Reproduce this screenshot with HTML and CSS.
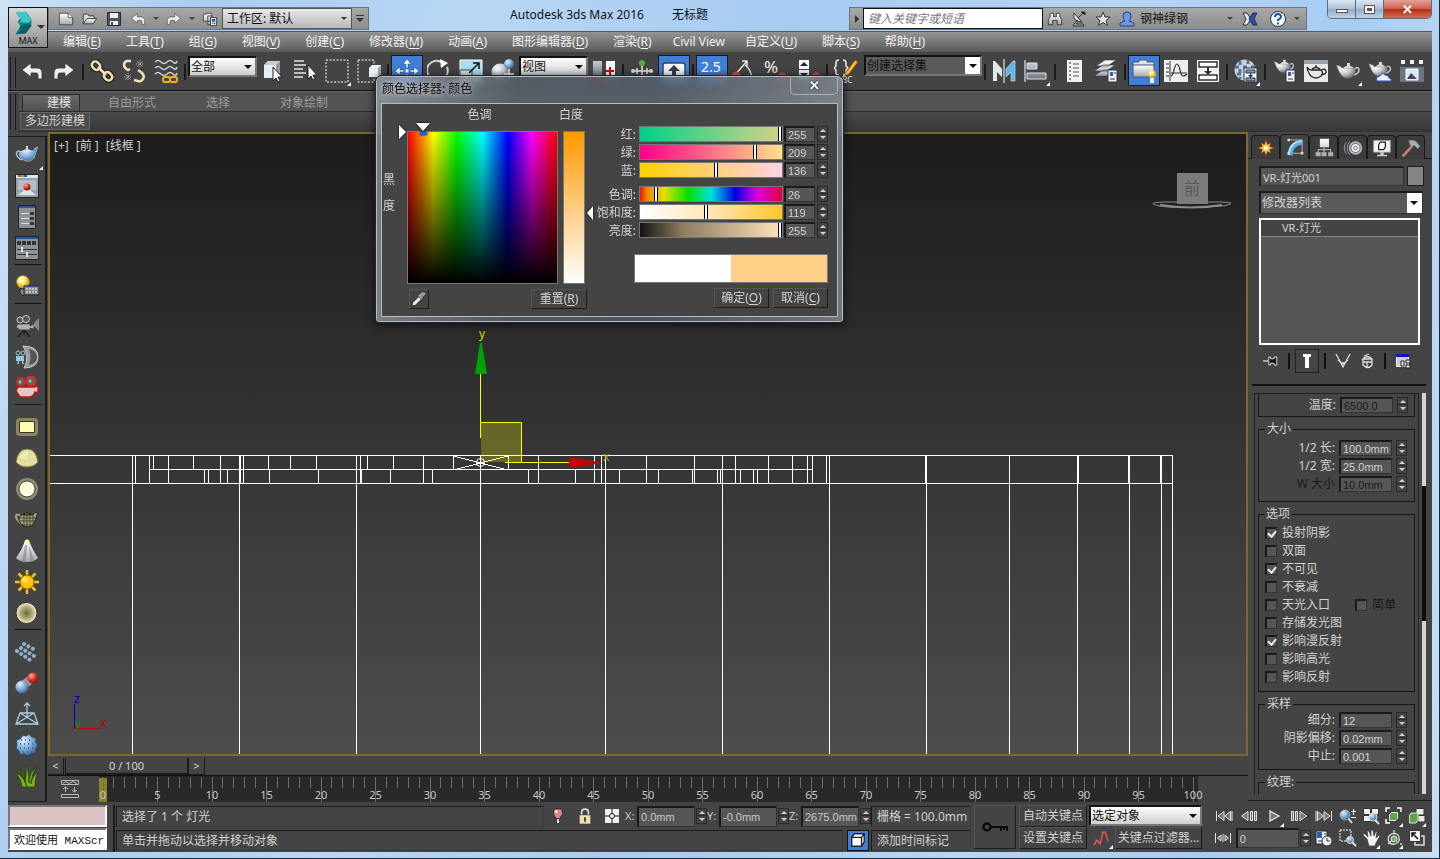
FILE: index.html
```
<!DOCTYPE html>
<html lang="zh-CN">
<head>
  <meta charset="UTF-8">
  <title>Autodesk 3ds Max 2016</title>
  <link rel="stylesheet" href="styles.css">
</head>
<body>

  <!-- icon sprite -->
  <svg class="sprite" width="0" height="0">
    <defs>
      <linearGradient id="metal" x1="0" y1="0" x2="0" y2="1"><stop offset="0" stop-color="#fff"/><stop offset="1" stop-color="#a2a8b0"/></linearGradient>
      <linearGradient id="steel" x1="0" y1="0" x2="0" y2="1"><stop offset="0" stop-color="#c5ccd6"/><stop offset="1" stop-color="#6d7684"/></linearGradient>
      <radialGradient id="ball" cx=".35" cy=".3" r=".8"><stop offset="0" stop-color="#fff"/><stop offset=".5" stop-color="#c4c8cc"/><stop offset="1" stop-color="#555"/></radialGradient>
      <radialGradient id="blueball" cx=".35" cy=".3" r=".8"><stop offset="0" stop-color="#e3f2ff"/><stop offset=".5" stop-color="#7aaad8"/><stop offset="1" stop-color="#31597f"/></radialGradient>
      <radialGradient id="redball" cx=".35" cy=".3" r=".8"><stop offset="0" stop-color="#ffb0a0"/><stop offset=".5" stop-color="#d03020"/><stop offset="1" stop-color="#701008"/></radialGradient>
      <radialGradient id="ring"><stop offset="0" stop-color="#6d6a38"/><stop offset=".6" stop-color="#b5b080"/><stop offset="1" stop-color="#fbf5cc"/></radialGradient>
      <radialGradient id="bulb" cx=".4" cy=".35"><stop offset="0" stop-color="#fff"/><stop offset=".5" stop-color="#fff27a"/><stop offset="1" stop-color="#dcae20"/></radialGradient>
    </defs>

    <symbol id="max" viewBox="0 0 24 28"><path fill="#0c8c90" d="M3 3 14 2l6 8v7l-6 8L3 26l5-9-3-4 3-4z"/><path fill="#3cc8c4" d="M3 3 14 2l2 4-7 4zM9 10l7-4 4 4-3 4-9-1z"/><path fill="#075e66" d="m8 17 9-3 3 3-6 8-6-3zM3 26l5-4 6 3z"/></symbol>
    <symbol id="new" viewBox="0 0 18 16"><path fill="url(#metal)" stroke="#444" d="M1.500 1.500h10l5 5v8h-15z"/><path fill="#fff" stroke="#555" d="M11.500 1.500v5h5"/></symbol>
    <symbol id="open" viewBox="0 0 18 16"><path fill="#ddd" stroke="#333" d="M1.500 13.500V2.500h5l1 2h6v3"/><path fill="url(#metal)" stroke="#333" d="m1.500 13.500 4-6h11l-4 6z"/></symbol>
    <symbol id="save" viewBox="0 0 16 16"><path fill="#4a5464" stroke="#222c38" d="M1.500 1.500h13v13h-13z"/><path fill="#eee" d="M4 2h8v5H4zM4 10h8v4H4z"/><path fill="#4a5464" d="M5 11h2v3H5z"/></symbol>
    <symbol id="undo" viewBox="0 0 24 24"><path fill="#f0f0f0" stroke="#333" stroke-width=".8" d="m2 11 9-7v5h6q5 0 5 5v6h-4v-4q0-2-2-2h-5v4z"/></symbol>
    <symbol id="redo" viewBox="0 0 24 24"><path fill="#f0f0f0" stroke="#333" stroke-width=".8" d="m22 11-9-7v5H7q-5 0-5 5v6h4v-4q0-2 2-2h5v4z"/></symbol>
    <symbol id="project" viewBox="0 0 18 16"><path fill="url(#metal)" stroke="#444" d="M1.500 2.500h4v-1h5v9h-9zM6.500 4.500h5v10h-5z"/><path fill="#f4f4f4" stroke="#333" d="M9.500 6.500h7v9h-7z"/><path fill="#2b5fa8" d="M11 8h4v3h-4zM11 12h1v2h-1zM13 12h2v2h-2z"/></symbol>
    <symbol id="binoculars" viewBox="0 0 18 16"><path fill="url(#metal)" stroke="#333" d="M3.500 1.500h4v4h3v-4h4v4l2 3v6h-5v-5h-5v5h-5v-6l2-3z"/></symbol>
    <symbol id="dish" viewBox="0 0 16 16"><path fill="url(#metal)" stroke="#333" d="M3 2q-2 9 8 9zM7 10l-2 3h7l1 2H2l1-2 3-4z"/><path stroke="#333" d="m7 7 5-5M10 1h4v3"/></symbol>
    <symbol id="star" viewBox="0 0 16 16"><path fill="#eee" stroke="#333" d="m8 1 2 5h5l-4 3.500 1.500 5L8 11.500l-4.500 3L5 9.500 1 6h5z"/></symbol>
    <symbol id="user" viewBox="0 0 16 16"><path fill="#6d97e8" stroke="#24408c" d="M8 1q4 0 4 4 0 3-2 5l5 2v3H1v-3l5-2Q4 8 4 5q0-4 4-4z"/></symbol>
    <symbol id="exchange" viewBox="0 0 16 14"><path fill="#dde6f5" stroke="#333" d="M1 1h4l4 6-4 6H1l3-6z"/><path fill="#2c4fa8" stroke="#24305c" d="M15 1h-4L7 7l4 6h4l-3-6z"/></symbol>
    <symbol id="help" viewBox="0 0 18 18"><circle cx="9" cy="9" r="7.500" fill="#f4f7fb" stroke="#333"/><path fill="none" stroke="#1a50b0" stroke-width="2" d="M6 7q0-3 3-3t3 3q0 1-3 3v1M9 12.500v2"/></symbol>

    <symbol id="link" viewBox="0 0 24 24"><g fill="none" stroke="#2a241a" stroke-width="5"><rect x="2" y="3" width="9" height="7" rx="3.500" transform="rotate(45 6 6)"/><rect x="13" y="14" width="9" height="7" rx="3.500" transform="rotate(45 18 18)"/><path d="m8 8 8 8"/></g><g fill="none" stroke="#f2dfb8" stroke-width="2.500"><rect x="2" y="3" width="9" height="7" rx="3.500" transform="rotate(45 6 6)"/><rect x="13" y="14" width="9" height="7" rx="3.500" transform="rotate(45 18 18)"/><path d="m8 8 8 8"/></g></symbol>
    <symbol id="unlink" viewBox="0 0 24 24"><g fill="none" stroke-width="2.500" stroke="#f2dfb8"><path d="M9 2H5Q2 3 2 6t4 5l2-1M16 11l4 3q3 3 1 6t-5 2l-4-1"/></g><path stroke="#bbb" stroke-dasharray="1 1" d="M14 5h8M15 2l6 6M18 1v8M15 8l6-6M2 18h8M3 15l6 6M6 14v8M3 21l6-6"/></symbol>
    <symbol id="warp" viewBox="0 0 24 24"><g fill="none" stroke="#c9ced2" stroke-width="1.500"><path d="M1 3q3-3 6 0t6 0 6 0 4-1M1 9q3-3 6 0t6 0 6 0 4-1M1 15q3-3 6 0t6 0 6 0 4-1"/></g><g fill="none" stroke="#f0b020" stroke-width="2"><rect x="9" y="18" width="7" height="5" rx="2"/><rect x="16" y="18" width="7" height="5" rx="2"/></g></symbol>
    <symbol id="pick" viewBox="0 0 24 24"><path fill="#e9edf2" d="m3 6 4-4h12v13l-3 4H3z"/><path fill="#c8ced6" d="M15 6h-12l4-4h12z"/><path fill="#8f99a5" d="m15 6 4-4v13l-4 4z"/><path fill="#fff" stroke="#222" d="M12 8v14l3-3 2 4 2-1-2-4h4z"/></symbol>
    <symbol id="byname" viewBox="0 0 24 24"><path stroke="#e4e4e4" stroke-width="1.500" d="M1 2h10M1 6h12M1 10h9M1 14h12M1 18h9"/><path fill="#fff" stroke="#222" d="M15 6v14l3-3 2 4 2-1-2-4h4z"/></symbol>
    <symbol id="region" viewBox="0 0 24 24"><path fill="none" stroke="#fff" stroke-dasharray="2 1.500" d="M1 1h22v22H1z"/></symbol>
    <symbol id="crossing" viewBox="0 0 24 24"><path fill="none" stroke="#fff" stroke-dasharray="2 1.500" d="M1 1h16v22H1z"/><path fill="#eef1f5" d="m12 9 3-3h9v9l-3 3h-9z"/><path fill="#9ba5b2" d="m21 9 3-3v9l-3 3z"/></symbol>
    <symbol id="move" viewBox="0 0 24 24"><path fill="#fff" stroke="#245" stroke-width=".5" d="m12 0 4 5h-3v4h-2V5H8zM12 24l4-5h-3v-4h-2v4H8zM0 12l5-4v3h4v2H5v3zM24 12l-5-4v3h-4v2h4v3z"/><path fill="#fff" d="M10.500 10.500h3v3h-3z"/></symbol>
    <symbol id="rotate" viewBox="0 0 24 24"><path fill="none" stroke="#d6dade" stroke-width="2" d="M4 19A9.500 9.500 0 0 1 15 3.500M20 8a9.500 9.500 0 0 1-4 12"/><path fill="#fff" d="m13 0 8 4-7 5z"/></symbol>
    <symbol id="scale" viewBox="0 0 24 24"><path fill="#a8dcf0" stroke="#fff" d="M1 1h22v22H1z"/><path fill="#dce0e8" stroke="#445" d="M1 11h12v12H1z"/><path fill="none" stroke="#111" stroke-width="1.500" d="m10 14 9-9M14 4h6v6"/></symbol>
    <symbol id="place" viewBox="0 0 24 24"><circle cx="9" cy="13" r="8.500" fill="url(#ball)"/><circle cx="18" cy="5" r="5" fill="url(#blueball)"/><path stroke="#fff" stroke-width="1.500" d="M18 10v10M13 15h10"/></symbol>
    <symbol id="pivot" viewBox="0 0 24 24"><path fill="url(#steel)" d="M1 2h9v16H1z"/><path fill="#fff" d="M14 2h9v16h-9z"/><path fill="#b00" d="M1 18h9v5H1z"/><path stroke="#d00" stroke-width="2" d="M18 8v8M14 12h8"/></symbol>
    <symbol id="manipulate" viewBox="0 0 24 24"><path fill="none" stroke="#e4e8ea" stroke-width="1.500" d="M12 4v9M3 12h18M7 9v6M17 9v6M12 13v9"/><circle cx="12" cy="4" r="3" fill="#58a848"/><circle cx="3" cy="12" r="2" fill="#ddd"/><circle cx="21" cy="12" r="2" fill="#ddd"/></symbol>
    <symbol id="keyboard" viewBox="0 0 24 24"><path fill="#f1f3f6" stroke="#345" stroke-width="1.500" d="M1 6q0-2 2-2h18q2 0 2 2v14H1z"/><path fill="#333c48" d="m12 6 6 6h-4v5h-4v-5H6z"/></symbol>
    <symbol id="snap" viewBox="0 0 24 24"><text x="1" y="13" font-size="14" fill="#fff">2.5</text><path fill="none" stroke="#d24a4a" stroke-width="3" d="M17 22v-3a3 3 0 0 1 6 0v3"/></symbol>
    <symbol id="anglesnap" viewBox="0 0 24 24"><path fill="none" stroke="#e8e8e8" stroke-width="1.500" d="m3 16 12-14M10 2h5v5M13 6q6 4 7 14"/><path fill="none" stroke="#d24a4a" stroke-width="3" d="M1 20v-3a3 3 0 0 1 6 0v3"/></symbol>
    <symbol id="percentsnap" viewBox="0 0 24 24"><text x="0" y="14" font-size="17" fill="#eee">%</text><path fill="none" stroke="#d24a4a" stroke-width="3" d="M15 21v-3a3 3 0 0 1 6 0v3"/></symbol>
    <symbol id="spinsnap" viewBox="0 0 24 24"><path fill="#f4f4f4" d="M3 1h10v9H3zM3 11h10v9H3z"/><path fill="#223" d="m8 3 4 4H4zM8 18l4-4H4z"/><path fill="none" stroke="#d24a4a" stroke-width="3" d="M17 21v-3a3 3 0 0 1 6 0v3"/></symbol>
    <symbol id="sets" viewBox="0 0 24 24"><path fill="none" stroke="#eee" stroke-width="1.500" d="M5 1Q2 1 2 4v3L0 9l2 2v3q0 2 3 2M9 1q3 0 3 3v3l2 2-2 2v3q0 2-3 2"/><path fill="#ffb428" stroke="#503000" stroke-width=".6" d="m12 13 9-12 3 2-9 12-4 2z"/><text x="3" y="24" font-size="8" fill="#eee">ABC</text></symbol>
    <symbol id="mirror" viewBox="0 0 24 24"><path fill="#e2e7ee" d="M1 2v20h4v-9l5 5v-8L3 2z"/><path fill="#5fb2e4" stroke="#c9ecff" stroke-width=".6" d="M23 2v20h-4v-9l-5 5v-8l7-8z"/><path stroke="#fff" d="M12 0v24"/></symbol>
    <symbol id="align" viewBox="0 0 24 24"><path stroke="#fff" d="M1 1v22"/><path fill="url(#steel)" stroke="#dde2e8" d="M3 4h10v6H3zM3 14h19v6H3z"/></symbol>
    <symbol id="layers" viewBox="0 0 24 24"><path fill="#f1f1f1" d="M5 1h15v22H5z"/><path stroke="#888" stroke-width="2" stroke-dasharray="2 2" d="M8 3v18"/><path stroke="#888" stroke-width="1.500" d="M11 5h6M11 9h6M11 13h6M11 17h6"/></symbol>
    <symbol id="layer" viewBox="0 0 24 24"><g fill="url(#metal)" stroke="#333" stroke-width=".6"><path d="m0 17 9-6h12l-8 6zM0 12l9-6h12l-8 6zM2 7l9-6h11l-8 6z"/></g><path fill="#f4f4f4" stroke="#334" d="M14 11h9v12h-9z"/><path fill="#2a62b0" d="M16 13h3v4h-3z"/><path stroke="#334" d="M16 20h5M20 14h2"/></symbol>
    <symbol id="ribbon" viewBox="0 0 24 24"><path fill="#dde3ea" stroke="#4a5668" d="M1 3h6V1h8v2h7v4H1z"/><path fill="url(#metal)" stroke="#4a5668" d="M1 6h21v12H1z"/><circle cx="20" cy="15" r="4" fill="url(#bulb)"/><path fill="#eee" d="M18 19h4v5h-4z"/></symbol>
    <symbol id="curve" viewBox="0 0 24 24"><path fill="#eceef0" d="M0 1h24v22H0z"/><path fill="none" stroke="#333" d="M6 2v20M2 5h3M2 9h3M2 13h3M2 17h3M7 14h16"/><path fill="none" stroke="#333" stroke-width="1.200" d="M7 17C10 17 10 5 13 5s3 12 6 12q2 0 4-2"/></symbol>
    <symbol id="schematic" viewBox="0 0 24 24"><path fill="#f4f4f4" d="M1 1h22v22H1z"/><path fill="#fff" stroke="#333" stroke-width="1.500" d="M3 3h18v5H3zM3 16h18v5H3z"/><path fill="#333" d="M11 8h2v4h3l-4 4-4-4h3z"/></symbol>
    <symbol id="material" viewBox="0 0 24 24"><circle cx="11" cy="11" r="10.500" fill="#c4d4e6"/><path fill="none" stroke="#5a7490" stroke-width="3" stroke-dasharray="4 4" d="M1 8h20M3 15h18M6 2v18M14 1v20"/><path fill="#f6f6f6" stroke="#234" d="M10 9h13v14H10z"/><path fill="#8a98aa" stroke="#234" d="M12 11h9v3h-9zM12 19h9v3h-9z"/><path fill="#234" d="M16 14h1v2h2l-2.500 3-2.500-3h2z"/></symbol>
    <symbol id="teapot" viewBox="0 0 24 20"><path fill="none" stroke="#c2c8cd" stroke-width="1.500" d="M18 8q5-3 5 1t-6 5"/><path fill="url(#ball)" stroke="#666" stroke-width=".5" d="M19 7H6Q4 4 0 4l1 2q2 6 5 9 6 5 11 0 4-4 2-8z"/><path fill="#d9dde2" d="M7 7q5-5 11 0zM11 2h3v3h-3z"/></symbol>
    <symbol id="rsetup" viewBox="0 0 24 24"><use href="#teapot" x="1" y="-1" width="22" height="17"/><path fill="#f4f4f4" stroke="#334" d="M14 11h9v12h-9z"/><path fill="#2a62b0" d="M16 13h3v4h-3z"/><path stroke="#334" d="M16 20h5M20 14h2"/></symbol>
    <symbol id="rframe" viewBox="0 0 24 24"><path fill="#e9eaec" d="M0 1h24v22H0z"/><path fill="#9aa2ac" d="M0 1h24v4H0z"/><path fill="none" stroke="#222" stroke-width="1.300" d="M17 11H7q-2 0-4-3 1 6 4 9 5 4 10 0 3-3 0-6zM17 11q4-2 5 1t-5 4M8 10q4-3 8 0M12 6v2"/></symbol>
    <symbol id="rcloud" viewBox="0 0 24 24"><use href="#teapot" x="0" y="1" width="24" height="19"/><path fill="#e8f0ff" stroke="#2c54b8" d="M9 22q-2-4 3-5 2-4 5-1 4 0 4 3 3 0 2 3z"/></symbol>
    <symbol id="gallery" viewBox="0 0 24 24"><path fill="#eee" d="M1 1h4v4H1zM10 1h4v4h-4zM19 1h4v4h-4z"/><path fill="#6b7584" d="M0 8h24v15H0z"/><path fill="#dbe8f4" stroke="#fff" d="M6 10h12v11H6z"/><path fill="#446" d="m7 20 4-6 3 3 3 3z"/></symbol>

    <symbol id="bteapot" viewBox="0 0 24 24"><path fill="none" stroke="#9fc2dd" stroke-width="1.500" d="M6 9q-5-2-4.500 2T7 17"/><path fill="url(#blueball)" stroke="#d5e8f7" stroke-width=".5" d="M6 8h12q2-4 5-4l-1 2-3 9q-5 6-12 1-5-4-1-8z"/><path fill="#cfe2f2" d="M7 8q5-4 10 0zM11 3h2v3h-2z"/></symbol>
    <symbol id="vfb" viewBox="0 0 24 24"><path fill="#95a2ae" stroke="#222" d="M.5.500h23v23H.5z"/><path fill="#dfe6ec" d="M1 1h22v3H1z"/><path fill="#d44" d="M3 1h3v2H3z"/><path fill="#4c4" d="M6 1h3v2H6z"/><path fill="#44d" d="M9 1h3v2H9z"/><path fill="#b3bec8" d="M3 6h18v10H3z"/><path fill="#dde3e8" d="m3 21 6-5h6l6 5z"/><circle cx="12" cy="13" r="3.500" fill="url(#redball)"/></symbol>
    <symbol id="panel1" viewBox="0 0 24 24"><path fill="#8c9498" stroke="#222" d="M3.500.500h17v23h-17z"/><path fill="#2456a4" d="M4 1h16v2H4z"/><path stroke="#ddd" d="M6 8.500h8M6 13.500h8M6 18.500h8"/><path fill="#333" d="M15 7h4v3h-4zM15 12h4v3h-4zM15 17h4v3h-4z"/></symbol>
    <symbol id="panel2" viewBox="0 0 24 24"><path fill="#8c9498" stroke="#222" d="M.5.500h23v23H.5z"/><path fill="#2456a4" d="M1 1h22v2H1z"/><path fill="#333" d="M2 5h4v4H2zM7 5h4v4H7zM12 5h4v4h-4zM17 5h4v4h-4z"/><path stroke="#333" d="M2 13.500h20M2 18.500h20"/><path stroke="#fff" stroke-width="1.500" d="M7 11v5M12 16v5"/></symbol>
    <symbol id="vlight" viewBox="0 0 24 24"><circle cx="8" cy="7" r="6.500" fill="url(#bulb)"/><path fill="#888" stroke="#222" d="M5 14h6v4l-3 3-3-3z"/><path fill="#7f8b95" stroke="#222" d="M9 11h15v9H9z"/><path stroke="#2456a4" d="M9 11.500h15"/><path stroke="#fff" stroke-dasharray="2 1" d="M11 14h11M11 17h11"/></symbol>
    <symbol id="camera" viewBox="0 0 24 24"><circle cx="5" cy="6" r="3" fill="#555" stroke="#ccc"/><circle cx="11" cy="5" r="3.500" fill="#555" stroke="#ccc"/><path fill="#b0b0b0" stroke="#222" stroke-width=".5" d="M3 10h12v2l4-2v5l-4-1v2H5l-4-3z"/><path fill="#888" d="m19 9 5-5v13l-5-5z"/><path stroke="#222" stroke-width="1.500" d="m9 16-6 7M9 16l6 7M9 16v5"/></symbol>
    <symbol id="domecam" viewBox="0 0 24 24"><path fill="#999" stroke="#ccc" d="M8 1q15 0 15 11T9 23q6-11-1-22z"/><path fill="#555" d="M14 4q8 2 8 8t-8 8q3-8 0-16z"/><circle cx="3" cy="8" r="2" fill="#345" stroke="#9cc"/><circle cx="8" cy="8" r="2" fill="#345" stroke="#9cc"/><path fill="#9cc6dd" d="M1 11h8v5H1zM3 16h1v3H2zM7 16h1l1 3H7z"/></symbol>
    <symbol id="redcam" viewBox="0 0 24 24"><circle cx="6" cy="6" r="4" fill="#566" stroke="#d22" stroke-width="2"/><circle cx="16" cy="5" r="4.500" fill="#566" stroke="#e22" stroke-width="2"/><path fill="#e6c9c4" stroke="#c01818" stroke-width="1.500" d="M3 11h16l4-1v7l-3-1q-2 5-6 5H5L1 15z"/><circle cx="5" cy="6" r="1.500" fill="#6dd"/><circle cx="15" cy="5" r="1.500" fill="#6dd"/></symbol>
    <symbol id="plane" viewBox="0 0 24 24"><rect x="1" y="3" width="22" height="18" rx="4" fill="#8a8660"/><path fill="#fffcb0" stroke="#333" d="M4.500 6.500h15v11h-15z"/></symbol>
    <symbol id="dome" viewBox="0 0 24 24"><path fill="#e2de9e" stroke="#77744a" d="M1 16Q3 3 12 3t11 13q-4 5-11 5T1 16z"/><path fill="#f6f3c8" opacity=".6" d="M5 12q1-7 8-7l-1 9z"/></symbol>
    <symbol id="sphere" viewBox="0 0 24 24"><circle cx="12" cy="12" r="11" fill="#8d8a72"/><circle cx="12" cy="12" r="8" fill="#fffddd" stroke="#444"/></symbol>
    <symbol id="meshpot" viewBox="0 0 24 24"><path fill="none" stroke="#a8a07a" stroke-width="2" d="M6 8Q0 5 1 9t6 7"/><path fill="#a8a07a" stroke="#2a281c" d="M6 7h12q1-3 5-3l-1 3-3 9q-6 6-13 0Q2 12 6 7zM8 6q4-3 8 0z"/><path stroke="#2a281c" stroke-width=".7" d="M5 10h16M5 13h15M7 17h11M9 6v13M12 6v14M15 6v13M18 7v9"/></symbol>
    <symbol id="cone" viewBox="0 0 24 24"><path fill="url(#metal)" d="M10 2h4q4 10 9 17-4 4-11 4T1 19Q7 11 10 2z"/><path fill="#777" opacity=".5" d="M10 6 7 22l4 1 1-17zM14 6l1 16 4-1z"/><circle cx="12" cy="3" r="2.500" fill="#fff8b0"/></symbol>
    <symbol id="sun" viewBox="0 0 24 24"><path stroke="#f2c026" stroke-width="2.500" d="M12 0v24M0 12h24M3.500 3.500l17 17M3.500 20.500l17-17"/><circle cx="12" cy="12" r="7" fill="#ffc400" stroke="#8a6500"/><circle cx="10" cy="10" r="3" fill="#ffe060"/></symbol>
    <symbol id="disc" viewBox="0 0 24 24"><circle cx="11.500" cy="12" r="10.500" fill="url(#ring)" stroke="#333"/></symbol>
    <symbol id="lattice" viewBox="0 0 24 24"><path fill="none" stroke="#25384a" d="m9 4 13 7M6 8l13 8M2 11l13 9M9 4l-7 7M22 11l-7 9"/><g fill="none" stroke="#8fb0cc" stroke-width="4" stroke-linecap="round" stroke-dasharray=".1 4.900"><path d="m9 4 13 7M6 8l13 8M2 11l13 9"/></g></symbol>
    <symbol id="meta" viewBox="0 0 24 24"><path fill="#b09098" d="m4 12 12-9 5 6-10 9z"/><circle cx="7" cy="16" r="6.500" fill="url(#blueball)"/><circle cx="18" cy="7" r="5.500" fill="url(#redball)"/></symbol>
    <symbol id="pyramid" viewBox="0 0 24 24"><path fill="none" stroke="#a9cbe2" stroke-width="1.300" d="M5 11h14l4 11H1zM5 11l18 11M19 11 1 22M12 1v15M9 4l3-3 3 3"/></symbol>
    <symbol id="rock" viewBox="0 0 24 24"><path fill="url(#blueball)" stroke="#2a4868" d="m8 2 3 1 3-2 3 3 4 1v4l2 3-2 4v4l-5 1-3 2-4-2-4 1-1-4-3-3 1-4-1-4 4-1z"/><path stroke="#35587c" stroke-dasharray="1 3" stroke-width="1.500" d="M6 7h12M5 11h15M5 15h14M8 19h10"/></symbol>
    <symbol id="grass" viewBox="0 0 24 24"><path fill="#79b21e" stroke="#263d08" stroke-width=".7" d="M12 23Q9 12 1 9q6 8 6 14l-4-3 2 3h15q0-10 3-15-6 4-7 12Q17 8 22 3q-8 5-8 16Q14 7 11 1q1 10-1 17Q9 8 5 4q3 8 7 19z"/></symbol>

    <symbol id="t-create" viewBox="0 0 24 24"><path stroke="#b8431c" stroke-width="1.500" d="M12 2v20M2 12h20"/><path fill="#ffb03a" d="m12 4 2 4 4-2-2 4 4 2-4 2 2 4-4-2-2 4-2-4-4 2 2-4-4-2 4-2-2-4 4 2z"/><circle cx="12" cy="12" r="3" fill="#fff7b8"/></symbol>
    <symbol id="t-modify" viewBox="0 0 24 24"><path fill="none" stroke="#c6c6c6" d="M4.500 3.500h16v16h-16"/><path fill="none" stroke="#56aeea" stroke-width="6" d="M6 22Q7 7 21 6"/><path fill="none" stroke="#d6efff" stroke-width="1.500" d="M5 20Q6 6 20 5"/><path fill="#ddd" d="M3 2h3v3H3zM19 18h3v3h-3zM3 18h3v3H3z"/></symbol>
    <symbol id="t-hier" viewBox="0 0 24 24"><path fill="url(#metal)" d="M7 1h11v10H7zM2 17h6v5H2zM9 17h6v5H9zM17 17h6v5h-6z"/><path fill="none" stroke="#ddd" d="M12 11v6M5 17v-3h15v3"/></symbol>
    <symbol id="t-motion" viewBox="0 0 24 24"><path fill="none" stroke="#aaa" d="M8 4q-6 8 0 16M4 5q-5 7 0 14"/><circle cx="15" cy="12" r="8" fill="#b6bcc4"/><circle cx="15" cy="12" r="5.500" fill="#e8eaec" stroke="#555"/><circle cx="15" cy="12" r="2" fill="#fff" stroke="#555"/></symbol>
    <symbol id="t-display" viewBox="0 0 24 24"><path fill="#f2f3f5" stroke="#9aa" d="M2 3h20v14H2z"/><path fill="#ccc" d="M10 17h4v3h4v2H6v-2h4z"/><path fill="#fff" stroke="#222" stroke-width="1.500" d="m8 8 2-3h6v6l-2 3H8z"/></symbol>
    <symbol id="t-util" viewBox="0 0 24 24"><path stroke="#c98070" stroke-width="3" d="m2 22 11-12"/><path fill="#a9aeb4" stroke="#555" stroke-width=".5" d="M8 4q5-3 10 0l5 6-3 3-4-4-3 2-3-4q1-2-2-3z"/></symbol>

    <symbol id="pin" viewBox="0 0 18 16"><path stroke="#ddd" stroke-width="1.500" d="M0 8h6"/><path fill="#111" stroke="#eee" d="M6.500 3.500h2v2h4v-2h3v9h-3v-2h-4v2h-2z"/></symbol>
    <symbol id="showend" viewBox="0 0 16 16"><path fill="#fff" d="M4 1h8v3h-2v11H6V4H4z"/></symbol>
    <symbol id="unique" viewBox="0 0 16 16"><path fill="none" stroke="#ddd" stroke-width="1.300" d="m1 1 7 13 7-13M3 7l5 4 5-4M7 10h2"/></symbol>
    <symbol id="trash" viewBox="0 0 16 16"><path fill="none" stroke="#ddd" stroke-width="1.300" d="M4 6h9v6q-4 5-9 0zM4 9h9M5 3l5-2M3 7q5-6 10-1M8 9v5"/></symbol>
    <symbol id="config" viewBox="0 0 16 16"><path fill="#ccc" stroke="#eee" d="M1.500 1.500h12v12h-12z"/><path fill="#11c" d="M1 1h13v3H1z"/><path fill="#eee" stroke="#222" d="M6 8h3v5H6zM11 7h4v3h-4zM11 12h4v3h-4z"/></symbol>

    <symbol id="dropper" viewBox="0 0 18 18"><path fill="#eee" stroke="#111" stroke-width=".8" d="m1 17 1-4 8-8 3 3-8 8z"/><path fill="#999" stroke="#111" stroke-width=".6" d="m9 4 3-3q4-1 5 2l-2 3-2 1 1 2-2 1-5-5 2-1z"/></symbol>
    <symbol id="minicurve" viewBox="0 0 18 18"><path fill="none" stroke="#bbb" d="M.5.500h17v4H.5zM2 3.500l3-2 3 2 4-2 4 2M.5 14.500h17v3H.5zM4.500 7v5M2 9l2.500-2L7 9M13.500 7v5M11 10l2.500 2 2.500-2"/></symbol>
    <symbol id="marker" viewBox="0 0 16 18"><path stroke="#eee" stroke-width="2" d="M8 11v6"/><path fill="#d8868c" stroke="#401818" d="M5 1h6q3 2 2 6l-3 5H6L3 7q-1-4 2-6z"/><circle cx="6" cy="4" r="1.500" fill="#fff"/></symbol>
    <symbol id="lock" viewBox="0 0 12 14"><path fill="none" stroke="#ddd" stroke-width="1.500" d="M3 6V4q0-3 3-3t3 3v2"/><path fill="#f2ddb4" stroke="#333" stroke-width=".5" d="M1 6h10v8H1z"/><path stroke="#333" stroke-width="1.500" d="M6 8v4"/></symbol>
    <symbol id="gizmo" viewBox="0 0 16 16"><path fill="#f2f2f2" d="M1 1h14v14H1z"/><path stroke="#111" d="M8 1v4M8 11v4M1 8h4M11 8h4"/><circle cx="8" cy="8" r="2.500" fill="none" stroke="#111"/></symbol>
    <symbol id="cube" viewBox="0 0 18 18"><path fill="#fff" stroke="#222" stroke-width="1.500" d="m2 6 3-4h11v9l-3 5H2zM2 6h11v10M13 6l3-4"/></symbol>
    <symbol id="key" viewBox="0 0 26 14"><path fill="none" stroke="#0b0b0b" stroke-width="2" d="M8 7h17v4M19 7v4M22 7v3"/><circle cx="5" cy="7" r="3.500" fill="none" stroke="#0b0b0b" stroke-width="2.500"/></symbol>
    <symbol id="tangent" viewBox="0 0 18 18"><path fill="none" stroke="#e05858" stroke-width="1.500" d="m1 16 3-5 3 4 3-12h2l3 9"/><path stroke="#3a48b8" stroke-width="2" stroke-dasharray="2 2" d="M2 10h4M8 2h8M13 13h4"/></symbol>

    <symbol id="p-start" viewBox="0 0 18 14"><path fill="#777" stroke="#e4e4e4" d="M1.500 2v10M9 2.500 3 7l6 4.500zM15.500 2.500l-6 4.500 6 4.500zM17 2v10"/></symbol>
    <symbol id="p-prev" viewBox="0 0 18 14"><path fill="#777" stroke="#e4e4e4" d="M8 2.500 1.500 7 8 11.500zM10.500 2.500h2v9h-2zM14.500 2.500h2v9h-2z"/></symbol>
    <symbol id="p-play" viewBox="0 0 18 14"><path fill="#777" stroke="#e4e4e4" stroke-width="1.300" d="m5 2 9 5-9 5z"/></symbol>
    <symbol id="p-next" viewBox="0 0 18 14"><path fill="#777" stroke="#e4e4e4" d="m10 2.500 6.500 4.500-6.500 4.500zM1.500 2.500h2v9h-2zM5.500 2.500h2v9h-2z"/></symbol>
    <symbol id="p-end" viewBox="0 0 18 14"><path fill="#777" stroke="#e4e4e4" d="M16.500 2v10M9 2.500 15 7l-6 4.500zM2.500 2.500l6 4.500-6 4.500zM1 2v10"/></symbol>
    <symbol id="p-mode" viewBox="0 0 18 14"><path fill="#777" stroke="#e4e4e4" d="M1.500 2v10M7 4 3.500 7 7 10zM11 4l3.500 3-3.500 3zM16.500 2v10M9 3v8"/></symbol>
    <symbol id="n-time" viewBox="0 0 18 18"><path fill="#f4f4f4" stroke="#223" d="M1 2h11v13H1z"/><path fill="#2a62b0" d="M2 3h5v6H2z"/><path stroke="#223" d="M3 12h8M9 5h2M9 8h2"/><circle cx="12" cy="12" r="5" fill="#eee" stroke="#334"/><path fill="none" stroke="#334" d="M12 9v3h3"/></symbol>
    <symbol id="n-zoom" viewBox="0 0 18 18"><path stroke="#ddd" stroke-width="2" d="m9 11 4 5"/><circle cx="6" cy="8" r="5" fill="url(#blueball)" stroke="#ddd" stroke-width=".5"/><path stroke="#fff" d="M14.500 2v6M12 4.500h5M12 10.500h5"/></symbol>
    <symbol id="n-zoomall" viewBox="0 0 18 18"><path fill="#eee" stroke="#333" d="M1.500 1.500h7v6h-7zM9.500 1.500h7v6h-7zM1.500 8.500h7v6h-7z"/><circle cx="11" cy="10" r="4" fill="url(#blueball)" stroke="#ddd"/><path stroke="#ddd" stroke-width="2" d="m13 13 4 4"/></symbol>
    <symbol id="n-ext" viewBox="0 0 18 18"><path fill="none" stroke="#fff" stroke-width="1.500" d="M1 5V1h4M12 1h4v4M1 12v4h4"/><path fill="#5fa34a" stroke="#dbe9d4" d="m4.500 7.500 2-2h6v6l-2 2h-6z"/></symbol>
    <symbol id="n-extall" viewBox="0 0 18 18"><path fill="#e4ecdf" stroke="#333" d="M8 1.500h8v7H8zM10 8h7v7h-7z"/><path fill="#5fa34a" stroke="#dbe9d4" d="M1.500 8.500 3 6h7v7l-2 3H1.500z"/></symbol>
    <symbol id="n-region" viewBox="0 0 18 18"><path fill="none" stroke="#fff" stroke-dasharray="2 1" d="M1 1h11v11H1z"/><circle cx="11" cy="11" r="3.500" fill="url(#blueball)" stroke="#ddd"/><path stroke="#ddd" stroke-width="2" d="m13 13 4 4"/></symbol>
    <symbol id="n-pan" viewBox="0 0 18 18"><path fill="#f2f2f2" stroke="#333" stroke-width=".7" d="m5 10-4-4 1-2 4 4-1-6h2l2 5V1h2l1 6 2-5 1 1-1 6 3-3 1 1-4 7-1 3H7z"/></symbol>
    <symbol id="n-orbit" viewBox="0 0 18 18"><path fill="none" stroke="#ddd" stroke-width="1.300" d="M9 1v4M3 15l3-3M5 6q4-3 8 0 3 5-1 8-5 3-8-1-2-4 1-7M15 15h2"/><circle cx="9" cy="10" r="3" fill="#7fae6c" stroke="#eee"/></symbol>
    <symbol id="n-max" viewBox="0 0 18 18"><path fill="none" stroke="#ddd" stroke-width="1.500" d="M7 7h9v9H7z"/><path fill="#f4f4f4" stroke="#333" d="M1.500 1.500h11v11h-11z"/><path fill="none" stroke="#111" stroke-width="1.500" d="m4 4 6 6M4 8V4h4"/></symbol>
  </svg>

  <div class="window">

    <header class="top">
      <button class="app-button" aria-label="应用程序菜单"><svg class="app-logo"><use href="#max"/></svg><span>MAX</span></button>

      <div class="titlebar">
        <div class="quick">
          <button aria-label="新建"><svg><use href="#new"/></svg></button>
          <button aria-label="打开"><svg><use href="#open"/></svg></button>
          <button aria-label="保存"><svg><use href="#save"/></svg></button>
          <button class="drop" aria-label="撤消"><svg><use href="#undo"/></svg></button>
          <button class="drop" aria-label="重做"><svg><use href="#redo"/></svg></button>
          <button aria-label="项目"><svg><use href="#project"/></svg></button>
          <span class="workspace">
            <select aria-label="工作区"><option>工作区: 默认</option></select>
          </span>
          <button class="more" aria-label="自定义"></button>
        </div>
        <div class="caption"><span>Autodesk 3ds Max 2016</span><span>无标题</span></div>
        <div class="infocenter">
          <button class="info-arrow" aria-label="展开"></button>
          <input class="search" type="text" placeholder="键入关键字或短语" aria-label="搜索">
          <button aria-label="查找"><svg><use href="#binoculars"/></svg></button>
          <button aria-label="通讯"><svg><use href="#dish"/></svg></button>
          <button aria-label="收藏"><svg><use href="#star"/></svg></button>
          <button class="account"><svg><use href="#user"/></svg>钢神绿钢</button>
          <button aria-label="Exchange"><svg><use href="#exchange"/></svg></button>
          <button class="drop help" aria-label="帮助"><svg><use href="#help"/></svg></button>
        </div>
        <div class="win-buttons">
          <button aria-label="最小化"><i class="min"></i></button>
          <button aria-label="最大化"><i class="restore"></i></button>
          <button class="close" aria-label="关闭">✕</button>
        </div>
      </div>

      <nav class="menubar">
        <button>编辑(<u>E</u>)</button>
        <button>工具(<u>T</u>)</button>
        <button>组(<u>G</u>)</button>
        <button>视图(<u>V</u>)</button>
        <button>创建(<u>C</u>)</button>
        <button>修改器(<u>M</u>)</button>
        <button>动画(<u>A</u>)</button>
        <button>图形编辑器(<u>D</u>)</button>
        <button>渲染(<u>R</u>)</button>
        <button class="tight">Civil View</button>
        <button>自定义(<u>U</u>)</button>
        <button>脚本(<u>S</u>)</button>
        <button>帮助(<u>H</u>)</button>
      </nav>
    </header>

    <div class="toolbar">
      <i class="grip"></i>
      <button aria-label="撤消"><svg><use href="#undo"/></svg></button>
      <button aria-label="重做"><svg><use href="#redo"/></svg></button>
      <i class="sep"></i>
      <button aria-label="链接"><svg><use href="#link"/></svg></button>
      <button aria-label="断开链接"><svg><use href="#unlink"/></svg></button>
      <button aria-label="绑定到空间扭曲"><svg><use href="#warp"/></svg></button>
      <i class="sep"></i>
      <span class="combo filter"><select aria-label="选择过滤器"><option>全部</option></select></span>
      <button aria-label="选择对象"><svg><use href="#pick"/></svg></button>
      <button aria-label="按名称选择"><svg><use href="#byname"/></svg></button>
      <button class="fly" aria-label="矩形选择区域"><svg><use href="#region"/></svg></button>
      <button aria-label="窗口/交叉"><svg><use href="#crossing"/></svg></button>
      <i class="sep"></i>
      <button class="on" aria-label="移动"><svg><use href="#move"/></svg></button>
      <button aria-label="旋转"><svg><use href="#rotate"/></svg></button>
      <button aria-label="缩放"><svg><use href="#scale"/></svg></button>
      <button aria-label="放置"><svg><use href="#place"/></svg></button>
      <span class="combo filter"><select aria-label="参考坐标系"><option>视图</option></select></span>
      <button aria-label="轴点中心"><svg><use href="#pivot"/></svg></button>
      <i class="sep"></i>
      <button aria-label="操纵"><svg><use href="#manipulate"/></svg></button>
      <button class="on" aria-label="键盘快捷键覆盖"><svg><use href="#keyboard"/></svg></button>
      <i class="sep"></i>
      <button class="on" aria-label="捕捉开关"><svg><use href="#snap"/></svg></button>
      <button aria-label="角度捕捉"><svg><use href="#anglesnap"/></svg></button>
      <button aria-label="百分比捕捉"><svg><use href="#percentsnap"/></svg></button>
      <button aria-label="微调器捕捉"><svg><use href="#spinsnap"/></svg></button>
      <i class="sep"></i>
      <button aria-label="编辑命名选择集"><svg><use href="#sets"/></svg></button>
      <span class="combo named"><select aria-label="命名选择集"><option>创建选择集</option></select></span>
      <i class="sep"></i>
      <button aria-label="镜像"><svg><use href="#mirror"/></svg></button>
      <button class="fly" aria-label="对齐"><svg><use href="#align"/></svg></button>
      <i class="sep"></i>
      <button aria-label="场景资源管理器"><svg><use href="#layers"/></svg></button>
      <button aria-label="层资源管理器"><svg><use href="#layer"/></svg></button>
      <i class="sep"></i>
      <button class="on" aria-label="切换功能区"><svg><use href="#ribbon"/></svg></button>
      <button aria-label="曲线编辑器"><svg><use href="#curve"/></svg></button>
      <button aria-label="图解视图"><svg><use href="#schematic"/></svg></button>
      <i class="sep"></i>
      <button class="fly" aria-label="材质编辑器"><svg><use href="#material"/></svg></button>
      <i class="sep"></i>
      <button aria-label="渲染设置"><svg><use href="#rsetup"/></svg></button>
      <button aria-label="渲染帧窗口"><svg><use href="#rframe"/></svg></button>
      <button class="fly" aria-label="渲染产品"><svg><use href="#teapot"/></svg></button>
      <button aria-label="云渲染"><svg><use href="#rcloud"/></svg></button>
      <button aria-label="渲染库"><svg><use href="#gallery"/></svg></button>
    </div>

    <div class="ribbon">
      <i class="grip"></i>
      <div class="ribbon-body">
        <div class="ribbon-tabs">
          <button class="active">建模</button>
          <button>自由形式</button>
          <button>选择</button>
          <button>对象绘制</button>
        </div>
        <div class="ribbon-panel"><button>多边形建模</button></div>
      </div>
    </div>

    <main class="main">

      <aside class="side">
        <button class="fly" aria-label="渲染"><svg><use href="#bteapot"/></svg></button>
        <button aria-label="帧缓冲"><svg><use href="#vfb"/></svg></button>
        <button aria-label="选项面板"><svg><use href="#panel1"/></svg></button>
        <button aria-label="调整面板"><svg><use href="#panel2"/></svg></button>
        <i class="sep"></i>
        <button aria-label="灯光列表"><svg><use href="#vlight"/></svg></button>
        <i class="sep"></i>
        <button aria-label="物理相机"><svg><use href="#camera"/></svg></button>
        <button aria-label="穹顶相机"><svg><use href="#domecam"/></svg></button>
        <button aria-label="立体相机"><svg><use href="#redcam"/></svg></button>
        <i class="sep"></i>
        <button aria-label="平面灯光"><svg><use href="#plane"/></svg></button>
        <button aria-label="穹顶灯光"><svg><use href="#dome"/></svg></button>
        <button aria-label="球体灯光"><svg><use href="#sphere"/></svg></button>
        <button aria-label="网格灯光"><svg><use href="#meshpot"/></svg></button>
        <button aria-label="IES 灯光"><svg><use href="#cone"/></svg></button>
        <button aria-label="太阳光"><svg><use href="#sun"/></svg></button>
        <button aria-label="环境光"><svg><use href="#disc"/></svg></button>
        <i class="sep"></i>
        <button aria-label="实例化"><svg><use href="#lattice"/></svg></button>
        <button aria-label="变形球"><svg><use href="#meta"/></svg></button>
        <button aria-label="代理"><svg><use href="#pyramid"/></svg></button>
        <button aria-label="置换"><svg><use href="#rock"/></svg></button>
        <button aria-label="毛发"><svg><use href="#grass"/></svg></button>
      </aside>

      <section class="stage">
        <div class="viewport">
          <svg class="scene">
            <!-- wireframe -->
            <g stroke="#fff" shape-rendering="crispEdges">
              <path fill="none" d="M0 321.500H1122.500M0 349.500H1122.500M99 335.500H763"/>
              <path d="M85.500 322v28M99.500 322v28M103.500 322v14M118.500 322v28M143.500 322v14M154.500 336v14M158.500 336v14M170.500 322v28M177.500 336v14M190.500 322v28M193.500 322v28M218.500 322v14M219.500 336v14M240.500 322v14M266.500 322v14M310.500 322v28M317.500 322v14M343.500 322v14M373.500 322v28M268.500 336v14M311.500 336v14M340.500 336v14M382.500 336v14"/>
              <path d="M403.500 322v14M458.500 322v14M478.500 336v14M488.500 322v28M525.500 336v14M544.500 322v28M551.500 322v28M569.500 336v14M596.500 322v28M608.500 336v14M642.500 336v14M644.500 322v28M667.500 336v14M670.500 336v14M685.500 322v28M690.500 336v14M703.500 336v14M707.500 336v14M718.500 322v28M742.500 322v28M757.500 322v28M762.500 322v28M776.500 322v28M875.500 322v28M1028.500 322v28M1078.500 322v28M1110.500 322v28"/>
              <path d="m403 322 55 14M403 336l55-14" fill="none"/>
              <line x1="82.500" y1="322" x2="82.500" y2="100%"/>
              <line x1="189.500" y1="322" x2="189.500" y2="100%"/>
              <line x1="306.500" y1="322" x2="306.500" y2="100%"/>
              <line x1="430.500" y1="322" x2="430.500" y2="100%"/>
              <line x1="555.500" y1="322" x2="555.500" y2="100%"/>
              <line x1="672.500" y1="322" x2="672.500" y2="100%"/>
              <line x1="779.500" y1="322" x2="779.500" y2="100%"/>
              <line x1="876.500" y1="322" x2="876.500" y2="100%"/>
              <line x1="959.500" y1="322" x2="959.500" y2="100%"/>
              <line x1="1027.500" y1="322" x2="1027.500" y2="100%"/>
              <line x1="1079.500" y1="322" x2="1079.500" y2="100%"/>
              <line x1="1111.500" y1="322" x2="1111.500" y2="100%"/>
              <line x1="1122.500" y1="322" x2="1122.500" y2="100%"/>
            </g>
            <!-- move gizmo -->
            <rect x="431" y="288" width="41" height="40" fill="#ffff00" fill-opacity=".25"/>
            <path fill="none" stroke="#ff0" shape-rendering="crispEdges" d="M430.500 240v64M430.500 288.500h41v40M455 328.500h64"/>
            <path fill="#00a000" d="M430 209h2l5 31h-12z"/>
            <path fill="#c80000" d="m519 323 34 6-34 5z"/>
            <circle cx="430.500" cy="328.500" r="4" fill="none" stroke="#fff"/>
            <text x="429" y="204" fill="#d8d800" font-size="12">y</text>
            <text x="553" y="327" fill="#a8a800" font-size="12">x</text>
            <!-- world axis -->
            <path stroke="#0000c8" d="M24.500 570v24"/>
            <path stroke="#c80000" d="M24 594.500h26"/>
            <text x="24" y="569" fill="#0000c8" font-size="12">z</text>
            <text x="25" y="594" fill="#009000" font-size="12">y</text>
            <text x="50" y="593" fill="#b00000" font-size="12">x</text>
          </svg>
          <div class="vp-label"><span>[+]</span><span>[前 ]</span><span>[线框 ]</span></div>
          <svg class="viewcube" viewBox="0 0 80 42">
            <path fill="none" stroke="#8c8c8c" d="M25 33H12Q-8 34 8 37t62 0q18-3 0-4H56"/>
            <path fill="none" stroke="#8c8c8c" stroke-width="2" d="M8 36q32 5 62 0"/>
            <rect x="25" y="4" width="31" height="31" fill="#7c7c7c"/>
            <text x="40" y="25" font-size="16" text-anchor="middle" fill="#585858">前</text>
          </svg>
        </div>

        <div class="timeslider">
          <button>&lt;</button>
          <button class="thumb">0 / 100</button>
          <button>&gt;</button>
        </div>
        <div class="track">
          <button class="minicurve" aria-label="打开迷你曲线编辑器"><svg><use href="#minicurve"/></svg></button>
          <div class="ruler"><svg id="ruler"></svg></div>
        </div>
      </section>

      <aside class="command">
        <div class="cmd-tabs">
          <button aria-label="创建"><svg><use href="#t-create"/></svg></button>
          <button class="active" aria-label="修改"><svg><use href="#t-modify"/></svg></button>
          <button aria-label="层次"><svg><use href="#t-hier"/></svg></button>
          <button aria-label="运动"><svg><use href="#t-motion"/></svg></button>
          <button aria-label="显示"><svg><use href="#t-display"/></svg></button>
          <button aria-label="实用程序"><svg><use href="#t-util"/></svg></button>
        </div>
        <div class="cmd-body">
          <div class="name-row">
            <input type="text" value="VR-灯光001" aria-label="名称">
            <button class="swatch" aria-label="对象颜色"></button>
          </div>
          <span class="combo modifiers"><select aria-label="修改器列表"><option>修改器列表</option></select></span>
          <div class="stack"><div class="stack-item">VR-灯光</div></div>
          <div class="stack-tools">
            <button aria-label="锁定堆栈"><svg><use href="#pin"/></svg></button>
            <i class="sep"></i>
            <button class="pressed" aria-label="显示最终结果"><svg><use href="#showend"/></svg></button>
            <i class="sep"></i>
            <button aria-label="使唯一"><svg><use href="#unique"/></svg></button>
            <button aria-label="移除修改器"><svg><use href="#trash"/></svg></button>
            <i class="sep"></i>
            <button aria-label="配置修改器集"><svg><use href="#config"/></svg></button>
          </div>
        </div>

        <div class="rollouts">
          <div class="rollout">
            <div class="group cut">
              <div class="param"><label for="temp">温度:</label><input id="temp" type="text" value="6500.0" disabled><span class="spin"><button aria-label="增"></button><button aria-label="减"></button></span></div>
            </div>
            <fieldset class="group size">
              <legend>大小</legend>
              <div class="param"><label for="len">1/2 长:</label><input id="len" type="text" value="100.0mm"><span class="spin"><button aria-label="增"></button><button aria-label="减"></button></span></div>
              <div class="param"><label for="wid">1/2 宽:</label><input id="wid" type="text" value="25.0mm"><span class="spin"><button aria-label="增"></button><button aria-label="减"></button></span></div>
              <div class="param off"><label for="wsize">W 大小</label><input id="wsize" type="text" value="10.0mm" disabled><span class="spin"><button aria-label="增"></button><button aria-label="减"></button></span></div>
            </fieldset>
            <fieldset class="group options">
              <legend>选项</legend>
              <div class="check"><label><input type="checkbox" checked>投射阴影</label></div>
              <div class="check"><label><input type="checkbox">双面</label></div>
              <div class="check"><label><input type="checkbox" checked>不可见</label></div>
              <div class="check"><label><input type="checkbox">不衰减</label></div>
              <div class="check"><label class="first"><input type="checkbox">天光入口</label><label class="off"><input type="checkbox" disabled>简单</label></div>
              <div class="check"><label><input type="checkbox">存储发光图</label></div>
              <div class="check"><label><input type="checkbox" checked>影响漫反射</label></div>
              <div class="check"><label><input type="checkbox">影响高光</label></div>
              <div class="check"><label><input type="checkbox">影响反射</label></div>
            </fieldset>
            <fieldset class="group">
              <legend>采样</legend>
              <div class="param"><label for="subd">细分:</label><input id="subd" type="text" value="12"><span class="spin"><button aria-label="增"></button><button aria-label="减"></button></span></div>
              <div class="param"><label for="bias">阴影偏移:</label><input id="bias" type="text" value="0.02mm"><span class="spin"><button aria-label="增"></button><button aria-label="减"></button></span></div>
              <div class="param"><label for="cutoff">中止:</label><input id="cutoff" type="text" value="0.001"><span class="spin"><button aria-label="增"></button><button aria-label="减"></button></span></div>
            </fieldset>
            <fieldset class="group texture">
              <legend>纹理:</legend>
            </fieldset>
          </div>
          <div class="scroll"><i></i></div>
        </div>
      </aside>
    </main>

    <footer class="status">
      <div class="listener">
        <input class="pink" type="text" aria-label="宏录制器">
        <input type="text" value="欢迎使用 MAXScr" aria-label="侦听器">
      </div>
      <div class="messages">
        <div class="row">
          <div class="well grow">选择了 1 个 灯光</div>
          <div class="status-icons">
            <button aria-label="标记"><svg><use href="#marker"/></svg></button>
            <button aria-label="选择锁定"><svg><use href="#lock"/></svg></button>
            <button aria-label="绝对模式"><svg><use href="#gizmo"/></svg></button>
          </div>
          <div class="coord"><label for="cx">X:</label><input id="cx" type="text" value="0.0mm"><span class="spin"><button aria-label="增"></button><button aria-label="减"></button></span></div>
          <div class="coord"><label for="cy">Y:</label><input id="cy" type="text" value="-0.0mm"><span class="spin"><button aria-label="增"></button><button aria-label="减"></button></span></div>
          <div class="coord"><label for="cz">Z:</label><input id="cz" type="text" value="2675.0mm"><span class="spin"><button aria-label="增"></button><button aria-label="减"></button></span></div>
          <div class="well fixed">栅格 = 100.0mm</div>
        </div>
        <div class="row">
          <div class="well grow">单击并拖动以选择并移动对象</div>
          <button class="degrade" aria-label="自适应降级"><svg><use href="#cube"/></svg></button>
          <div class="well fixed">添加时间标记</div>
        </div>
      </div>
      <button class="raised bigkey" aria-label="设置关键点"><svg><use href="#key"/></svg></button>
      <div class="keys">
        <button class="raised">自动关键点</button>
        <button class="raised">设置关键点</button>
      </div>
      <div class="filters">
        <span class="combo"><select aria-label="选定对象"><option>选定对象</option></select></span>
        <div class="row">
          <button class="fly" aria-label="切线"><svg><use href="#tangent"/></svg></button>
          <button class="raised grow">关键点过滤器...</button>
        </div>
      </div>
      <div class="playback">
        <div class="row">
          <button aria-label="转至开头"><svg><use href="#p-start"/></svg></button>
          <button aria-label="上一帧"><svg><use href="#p-prev"/></svg></button>
          <button class="fly" aria-label="播放"><svg><use href="#p-play"/></svg></button>
          <button aria-label="下一帧"><svg><use href="#p-next"/></svg></button>
          <button aria-label="转至结尾"><svg><use href="#p-end"/></svg></button>
        </div>
        <div class="row">
          <button class="mode" aria-label="关键点模式"><svg><use href="#p-mode"/></svg></button>
          <input type="text" value="0" aria-label="当前帧"><span class="spin"><button aria-label="增"></button><button aria-label="减"></button></span>
          <button class="time" aria-label="时间配置"><svg><use href="#n-time"/></svg></button>
        </div>
      </div>
      <div class="navs">
        <button aria-label="缩放"><svg><use href="#n-zoom"/></svg></button>
        <button aria-label="缩放所有视图"><svg><use href="#n-zoomall"/></svg></button>
        <button class="fly" aria-label="最大化显示"><svg><use href="#n-ext"/></svg></button>
        <button class="fly" aria-label="所有视图最大化显示"><svg><use href="#n-extall"/></svg></button>
        <button aria-label="缩放区域"><svg><use href="#n-region"/></svg></button>
        <button class="fly" aria-label="平移"><svg><use href="#n-pan"/></svg></button>
        <button class="fly" aria-label="环绕"><svg><use href="#n-orbit"/></svg></button>
        <button aria-label="最大化视口"><svg><use href="#n-max"/></svg></button>
      </div>
    </footer>
  </div>

  <!-- color selector, floats over the viewport -->
  <div class="dialog" role="dialog" aria-label="颜色选择器">
    <div class="dialog-title"><span>颜色选择器: 颜色</span><button aria-label="关闭">✕</button></div>
    <div class="dialog-body">
      <div class="picker">
        <span class="hue-title">色调</span>
        <span class="white-title">白度</span>
        <span class="black-title">黑<br>度</span>
        <div class="hue"><i class="down"></i><i class="right"></i><i class="spot"></i></div>
        <div class="white"><i class="left"></i></div>
        <div class="picker-buttons">
          <button class="dropper raised" aria-label="吸管"><svg><use href="#dropper"/></svg></button>
          <button class="raised reset">重置(<u>R</u>)</button>
        </div>
      </div>
      <div class="values">
        <div class="chan"><label for="r">红:</label><input class="bar r" type="range" max="255" value="255" aria-label="红"><input id="r" type="text" value="255"><span class="spin"><button aria-label="增"></button><button aria-label="减"></button></span></div>
        <div class="chan"><label for="g">绿:</label><input class="bar g" type="range" max="255" value="209" aria-label="绿"><input id="g" type="text" value="209"><span class="spin"><button aria-label="增"></button><button aria-label="减"></button></span></div>
        <div class="chan"><label for="b">蓝:</label><input class="bar b" type="range" max="255" value="136" aria-label="蓝"><input id="b" type="text" value="136"><span class="spin"><button aria-label="增"></button><button aria-label="减"></button></span></div>
        <div class="chan next"><label for="h">色调:</label><input class="bar h" type="range" max="255" value="26" aria-label="色调"><input id="h" type="text" value="26"><span class="spin"><button aria-label="增"></button><button aria-label="减"></button></span></div>
        <div class="chan"><label for="s">饱和度:</label><input class="bar s" type="range" max="255" value="119" aria-label="饱和度"><input id="s" type="text" value="119"><span class="spin"><button aria-label="增"></button><button aria-label="减"></button></span></div>
        <div class="chan"><label for="v">亮度:</label><input class="bar v" type="range" max="255" value="255" aria-label="亮度"><input id="v" type="text" value="255"><span class="spin"><button aria-label="增"></button><button aria-label="减"></button></span></div>
        <div class="compare"></div>
        <div class="actions"><button class="raised">确定(<u>O</u>)</button><button class="raised">取消(<u>C</u>)</button></div>
      </div>
    </div>
  </div>

  <script>
    const ruler = document.getElementById('ruler');
    const NS = 'http://www.w3.org/2000/svg';

    function add(name, attrs, text) {
      const el = document.createElementNS(NS, name);
      for (const key in attrs) el.setAttribute(key, attrs[key]);
      if (text !== undefined) el.textContent = text;
      ruler.appendChild(el);
    }

    add('rect', { x: -4, y: 2, width: 8, height: 24, class: 'now' });
    for (let f = 0; f <= 100; f++) {
      const major = f % 5 === 0;
      add('line', { x1: f + '%', x2: f + '%', y1: 1, y2: major ? 26 : 12 });
      if (major) add('text', { x: f + '%', y: 23 }, f);
    }
  </script>

</body>
</html>
```
FILE: styles.css
```
* {
  box-sizing: border-box;
}

html, body {
  height: 100%;
}

body {
  margin: 0;
  font-family: "Noto Sans", "Noto Sans CJK SC", sans-serif;
  font-size: 12px;
  line-height: 16px;
  color: #d2d2d2;
  background: #444;
  overflow: hidden;
}

button, input, select {
  font: inherit;
  color: inherit;
  margin: 0;
  padding: 0;
  border: 0;
  border-radius: 0;
  background: none;
  outline: none;
}

button {
  display: flex;
  align-items: center;
  justify-content: center;
  white-space: nowrap;
}

input[type="text"] {
  min-width: 0;
}

u {
  text-underline-offset: 2px;
}

.sprite {
  position: absolute;
}

.window {
  height: 100%;
  display: flex;
  flex-direction: column;
  padding: 0 7px 6px 8px;
  border: 1px solid #1c2530;
  border-width: 0 1px 1px 0;
  background: linear-gradient(100deg, #cfe2f7 0, #a9cdf2 12%, #b9d6f4 30%, #a6cbf1 50%, #b7d5f5 70%, #a7ccf3 85%, #c8def5 100%);
}

/* title + menu */
.top {
  display: grid;
  grid-template-columns: 40px 1fr;
  grid-template-rows: 31px 21px;
  flex: none;
}

.app-button {
  grid-column: 1;
  grid-row: 1 / 3;
  margin: 7px 0 4px;
  flex-direction: column;
  z-index: 1;
  color: #111;
  font-size: 9px;
  line-height: 10px;
  background: linear-gradient(#d8d8d8, #8f8f8f);
  border: 1px solid #111;
  position: relative;
}

.app-button::after {
  content: "";
  position: absolute;
  right: 2px;
  top: 17px;
  border: 4px solid transparent;
  border-top-color: #334;
  border-bottom: 0;
}

.app-logo {
  width: 24px;
  height: 26px;
  margin-right: 8px;
}

.titlebar {
  grid-column: 2;
  grid-row: 1;
  display: flex;
  align-items: flex-start;
  color: #111;
}

.quick, .infocenter {
  display: flex;
  align-items: center;
  height: 23px;
  margin-top: 7px;
  background: linear-gradient(#a8a8a8, #8c8c8c);
  border: 1px solid #6c7680;
}

.quick {
  padding-left: 5px;
  width: 321px;
}

.quick button {
  width: 24px;
  height: 20px;
}

.quick svg, .infocenter svg {
  width: 16px;
  height: 16px;
  flex: none;
}

.quick .drop {
  width: 36px;
}

.drop::after, .account::after {
  content: "";
  border: 3px solid transparent;
  border-top-color: #444;
  border-bottom: 0;
  margin-left: 7px;
}

.workspace {
  flex: 1;
  height: 21px;
  border: 1px solid #555;
  position: relative;
}

.workspace select {
  width: 100%;
  height: 19px;
  padding-left: 4px;
  appearance: none;
  color: #111;
  background: linear-gradient(#e8e8e8, #b8b8b8);
}

.workspace::after {
  content: "";
  position: absolute;
  right: 4px;
  top: 8px;
  border: 3px solid transparent;
  border-top-color: #333;
  border-bottom: 0;
}

.quick .more {
  width: 16px;
  flex-direction: column;
  gap: 2px;
}

.more::before {
  content: "";
  width: 8px;
  height: 1px;
  background: #333;
}

.more::after {
  content: "";
  border: 4px solid transparent;
  border-top-color: #333;
  border-bottom: 0;
}

.caption {
  flex: 1;
  display: flex;
  justify-content: center;
  gap: 28px;
  padding-top: 7px;
  white-space: nowrap;
}

.infocenter {
  width: 458px;
}

.infocenter button {
  width: 24px;
}

.infocenter .info-arrow {
  width: 13px;
}

.info-arrow::after {
  content: "";
  border: 4px solid transparent;
  border-left-color: #333;
  border-right: 0;
}

.search {
  width: 180px;
  height: 21px;
  padding-left: 4px;
  background: #fff;
  border: 1px solid #111;
  font-style: italic;
}

.search::placeholder {
  color: #777;
}

.infocenter .account {
  flex: 1;
  justify-content: flex-start;
  padding: 0 5px 0 4px;
  gap: 5px;
}

.account::after {
  margin-left: auto;
}

.infocenter .help {
  width: 44px;
}

.infocenter .help svg {
  width: 18px;
  height: 18px;
}

.win-buttons {
  display: flex;
  height: 19px;
  margin-left: 20px;
  border: 1px solid #5c6c80;
  border-top: 0;
  border-radius: 0 0 5px 5px;
  overflow: hidden;
}

.win-buttons button {
  width: 28px;
  background: linear-gradient(#dbe7f4, #aebfd2 50%, #94abc6 51%, #c0d4e8);
  border-right: 1px solid #5c6c80;
}

.win-buttons .close {
  width: 47px;
  color: #fff;
  font-size: 13px;
  font-weight: bold;
  background: linear-gradient(#e0a498, #cf5d48 50%, #b02c18 51%, #d2704c);
  border: 0;
}

.min {
  width: 12px;
  height: 4px;
  margin-top: 4px;
  background: #fff;
  border: 1px solid #555;
}

.restore {
  width: 11px;
  height: 9px;
  border: 1px solid #555;
  background: #555;
  box-shadow: inset 0 0 0 2px #fff;
}

.menubar {
  grid-column: 1 / 3;
  grid-row: 2;
  display: flex;
  padding-left: 43px;
  color: #f2f2f2;
  border-top: 1px solid #555;
  background: linear-gradient(#949494, #5a5a5a);
}

.menubar button {
  padding: 0 13px 0 12px;
}

.menubar .tight {
  padding: 0 8px;
}

/* main toolbar */
.toolbar {
  display: flex;
  height: 39px;
  flex: none;
  padding-left: 2px;
  padding-top: 3px;
  background: #444;
  border-bottom: 1px solid #111;
}

.grip {
  width: 6px;
  margin: 2px 0;
  border: 1px solid #1a1a1a;
  border-width: 0 1px;
}

.toolbar button {
  width: 32px;
  height: 31px;
  flex: none;
  position: relative;
}

.toolbar svg, .side svg {
  width: 24px;
  height: 24px;
}

.toolbar .on {
  background: #3f7fd8;
  border: 1px solid #1c1c1c;
}

.fly {
  position: relative;
}

.fly::after {
  content: "";
  position: absolute;
  right: 2px;
  bottom: 0;
  border: 2px solid transparent;
  border-right-color: #fff;
  border-bottom-color: #fff;
}

.toolbar .sep {
  width: 2px;
  height: 16px;
  margin: 9px 2px 0;
  background: #1c1c1c;
}

.combo {
  display: block;
  position: relative;
}

.combo select {
  width: 100%;
  height: 100%;
  appearance: none;
  padding-left: 1px;
  color: #111;
  border: 2px solid #111;
  border-right-color: #777;
  border-bottom-color: #777;
  background: linear-gradient(#fff, #cfcfcf);
}

.combo::after {
  content: "";
  position: absolute;
  right: 5px;
  top: 50%;
  margin-top: -2px;
  border: 4px solid transparent;
  border-top-color: #111;
  border-bottom: 0;
  pointer-events: none;
}

.filter {
  width: 69px;
  height: 21px;
  margin-top: 1px;
}

.named {
  width: 120px;
  height: 21px;
  padding-left: 2px;
}

.named select, .modifiers select {
  background: linear-gradient(#5a5a5a, #5a5a5a) no-repeat 0 0 / calc(100% - 15px) 100%, #fff;
}

/* ribbon */
.ribbon {
  display: flex;
  height: 41px;
  flex: none;
  padding-left: 2px;
  background: #444;
  border-top: 1px solid #666;
}

.ribbon-body {
  flex: 1;
  margin-left: 3px;
  border-bottom: 2px solid #333;
}

.ribbon-tabs {
  display: flex;
  height: 20px;
  padding: 2px 0 0 3px;
  gap: 50px;
  color: #9c9c9c;
  background: #525252;
  border-bottom: 1px solid #2c2c2c;
}

.ribbon-tabs .active {
  width: 58px;
  margin-right: -22px;
  padding: 0 8px 0 24px;
  color: #e0e0e0;
  background: linear-gradient(#6a6a6a, #505050);
  border: 1px solid #2c2c2c;
  border-bottom: 0;
}

.ribbon-panel {
  background: linear-gradient(#4a4a4a, #383838);
  height: 19px;
}

.ribbon-panel button {
  margin-left: 1px;
  height: 18px;
  padding: 0 4px;
  border: 1px solid #666;
  background: #4c4c4c;
}

/* middle */
.main {
  flex: 1;
  min-height: 0;
  display: grid;
  grid-template-columns: 40px 1fr 184px;
  background: #444;
}

.side {
  min-height: 0;
  overflow: hidden;
  padding-top: 2px;
  margin-top: 4px;
  margin-right: 1px;
  border-top: 1px solid #1a1a1a;
  border-right: 2px solid #1c1c1c;
  border-bottom: 1px solid #1c1c1c;
}

.side button {
  width: 37px;
  height: 31px;
}

.side .sep {
  display: block;
  height: 1px;
  margin: 1px 4px 6px 7px;
  background: #111;
}

.stage {
  display: flex;
  flex-direction: column;
  min-width: 0;
  min-height: 0;
}

.viewport {
  flex: 1;
  min-height: 0;
  position: relative;
  border: 2px solid #7d6a2a;
  background: linear-gradient(#1c1c1c, #4d4d4d);
}

.scene {
  display: block;
  width: 100%;
  height: 100%;
}

.vp-label {
  position: absolute;
  left: 4px;
  top: 4px;
  display: flex;
  gap: 7px;
}

.viewcube {
  position: absolute;
  right: 14px;
  top: 35px;
  width: 80px;
  height: 42px;
}

.timeslider {
  display: flex;
  height: 19px;
  flex: none;
  padding-top: 2px;
  font-size: 11px;
}

.timeslider button {
  width: 16px;
  border: 1px solid #1a1a1a;
  border-width: 0 1px 1px 0;
}

.timeslider .thumb {
  width: 124px;
  border-width: 0 2px 2px 1px;
  margin-left: 1px;
}

.track {
  display: flex;
  height: 27px;
  flex: none;
  border-top: 1px solid #111;
}

.minicurve {
  width: 51px;
  padding-right: 8px;
}

.minicurve svg {
  width: 18px;
  height: 18px;
}

.ruler {
  flex: 1;
  height: 26px;
  margin-right: 50px;
  padding: 0 5px 0 4px;
  background: #292929;
}

.ruler svg {
  display: block;
  width: 100%;
  height: 26px;
  overflow: visible;
}

.ruler line {
  stroke: #6c6c6c;
  shape-rendering: crispEdges;
}

.ruler text {
  font-size: 11px;
  text-anchor: middle;
  fill: #c8c8c8;
}

.ruler .now {
  fill: #8f8420;
}

/* command panel */
.command {
  min-height: 0;
  display: flex;
  flex-direction: column;
  border-bottom: 1px solid #1a1a1a;
  margin-bottom: 1px;
}

.cmd-tabs {
  display: flex;
  flex: none;
  height: 27px;
  padding: 3px 0 0 3px;
  border-bottom: 1px solid #1a1a1a;
}

.cmd-tabs button {
  width: 29px;
  height: 24px;
  background: #3c3c3c;
  border: 1px solid #1a1a1a;
  border-bottom: 0;
  border-radius: 4px 4px 0 0;
}

.cmd-tabs .active {
  height: 25px;
  margin-top: -1px;
  padding-bottom: 1px;
  background: #444;
}

.cmd-tabs svg {
  width: 22px;
  height: 20px;
}

.cmd-body {
  padding: 7px 8px 0 11px;
  flex: none;
}

.name-row {
  display: flex;
  gap: 3px;
}

.name-row input {
  flex: 1;
  height: 20px;
  padding-left: 2px;
  font-size: 11px;
  background: #565656;
  border: 1px solid #1c1c1c;
  border-width: 2px 1px 1px 2px;
  border-right-color: #333;
  border-bottom-color: #333;
}

.swatch {
  width: 17px;
  height: 20px;
  background: #858585;
  border: 1px solid #1c1c1c;
}

.modifiers {
  height: 23px;
  margin: 5px 1px 4px 0;
}

.modifiers select {
  padding-left: 1px;
  color: #d2d2d2;
  border-width: 2px 1px 1px 2px;
  border-color: #1c1c1c #333 #333 #1c1c1c;
}

.stack {
  height: 127px;
  margin-right: 4px;
  background: #565656;
  border: 2px solid #fff;
}

.stack-item {
  height: 17px;
  padding-left: 21px;
  line-height: 15px;
  font-size: 11px;
  background: #444;
  border-bottom: 1px solid #888;
}

.stack-tools {
  display: flex;
  align-items: center;
  height: 24px;
  margin-top: 4px;
}

.stack-tools button {
  width: 24px;
  height: 24px;
}

.stack-tools .sep {
  width: 2px;
  height: 16px;
  margin: 0 5px;
  background: #111;
}

.stack-tools svg {
  width: 16px;
  height: 16px;
}

.stack-tools .pressed {
  border: 1px solid #222;
}

.rollouts {
  flex: 1;
  min-height: 0;
  display: flex;
  margin: 11px 6px 6px 4px;
  border-top: 2px solid #111;
  padding-top: 7px;
}

.rollout {
  flex: 1;
  overflow: hidden;
  padding: 0 3px;
  border: 1px solid #222;
  border-bottom: 0;
  margin-left: 2px;
}

.group {
  margin: 0 0 5px;
  padding: 0 7px 4px;
  border: 1px solid #161616;
  min-width: 0;
}

.group.cut {
  border-top: 0;
  padding: 2px 6px 2px;
}

.group.size {
  padding: 3px 7px 8px;
}

.group.options {
  padding: 3px 7px 5px 6px;
}

.group.texture {
  height: 40px;
}

legend {
  margin-left: -1px;
  padding: 0 2px;
  height: 14px;
  line-height: 14px;
}

.param {
  display: flex;
  align-items: center;
  height: 18px;
}

.param label {
  flex: 1;
  text-align: right;
  padding-right: 4px;
}

.param input {
  width: 53px;
}

.param input, .chan input[type="text"], .coord input, .playback input {
  height: 16px;
  padding-left: 2px;
  font-family: "Liberation Sans", sans-serif;
  font-size: 11px;
  background: #565656;
  border: 1px solid #333;
  border-width: 2px 1px 1px 2px;
  border-top-color: #1a1a1a;
  border-left-color: #1a1a1a;
}

.param.off, .param input:disabled {
  color: #1a1a1a;
}

.spin {
  display: flex;
  flex-direction: column;
  width: 11px;
  margin-left: 4px;
}

.spin button {
  width: 11px;
  height: 8px;
  border: 1px solid #2a2a2a;
}

.spin button + button {
  border-top: 0;
}

.spin button::after {
  content: "";
  border: 3px solid transparent;
  border-bottom-color: #d0d0d0;
  border-top: 0;
}

.spin button + button::after {
  border: 3px solid transparent;
  border-top-color: #d0d0d0;
  border-bottom: 0;
}

.check {
  display: flex;
  height: 18px;
}

.check label {
  display: flex;
  align-items: center;
}

.check .first {
  width: 90px;
}

.check .off {
  color: #161616;
}

.check input {
  appearance: none;
  width: 12px;
  height: 12px;
  margin-right: 5px;
  background: #565656;
  border: 2px solid #1a1a1a;
  border-right: 1px solid #333;
  border-bottom: 1px solid #333;
  position: relative;
}

.check input:checked::after {
  content: "";
  position: absolute;
  left: 2px;
  top: 0;
  width: 4px;
  height: 6px;
  border: 2px solid #eee;
  border-width: 0 2px 2px 0;
  transform: rotate(40deg);
}

.scroll {
  width: 4px;
  margin-left: 3px;
  background: #d4d4d4;
  display: flex;
  flex-direction: column;
}

.scroll i {
  height: 135px;
  margin-top: 93px;
  background: #0c0c0c;
}

/* status bar */
.status {
  display: flex;
  flex: none;
  height: 50px;
  padding: 3px 4px 0 0;
  background: #444;
}

.status .row {
  display: flex;
  align-items: center;
  height: 22px;
}

.grow {
  flex: 1;
}

.listener {
  width: 100px;
}

.listener input {
  display: block;
  width: 99px;
  height: 22px;
  margin-bottom: 1px;
  padding-left: 4px;
  color: #111;
  background: #fff;
  border: 2px solid #777;
  border-right-color: #fff;
  border-bottom-color: #fff;
  font-family: "Liberation Mono", "Noto Sans CJK SC", monospace;
  font-size: 11px;
}

.listener .pink {
  background: #dcc3c6;
}

.messages {
  flex: 1;
  min-width: 0;
  margin-left: 5px;
  padding-left: 1px;
  border-left: 2px solid #1a1a1a;
  display: flex;
  flex-direction: column;
  gap: 2px;
}

.well {
  height: 21px;
  padding-left: 5px;
  line-height: 19px;
  white-space: nowrap;
  overflow: hidden;
  border: 1px solid #1a1a1a;
  border-right-color: #3a3a3a;
  border-bottom-color: #3a3a3a;
}

.well.fixed {
  width: 100px;
}

.status-icons {
  display: flex;
}

.status-icons button {
  width: 27px;
  height: 20px;
}

.status-icons svg {
  width: 16px;
  height: 16px;
}

.coord {
  display: flex;
  align-items: center;
  width: 82px;
  color: #c8c8c8;
  font-size: 11px;
}

.coord label {
  width: 12px;
}

.coord input {
  width: 58px;
  height: 21px;
}

.coord .spin, .playback .spin {
  margin-left: 1px;
}

.degrade {
  width: 22px;
  height: 21px;
  margin: 0 2px 0 4px;
  background: #3f7fd8;
  border: 1px solid #111;
}

.degrade svg {
  width: 16px;
  height: 16px;
}

.raised {
  border: 1px solid #1c1c1c;
  border-top-color: #555;
  border-left-color: #555;
}

.bigkey {
  width: 42px;
  height: 44px;
  margin-left: 3px;
}

.bigkey svg {
  width: 26px;
  height: 14px;
}

.keys {
  width: 68px;
  margin-left: 3px;
}

.keys button {
  width: 100%;
  height: 22px;
}

.filters {
  width: 113px;
  margin-left: 2px;
}

.filters .combo {
  height: 21px;
  margin-bottom: 1px;
}

.filters .row button:first-child {
  width: 26px;
  height: 22px;
}

.filters .raised {
  height: 22px;
}

.filters svg, .playback svg, .navs svg {
  width: 18px;
  height: 18px;
}

.playback {
  width: 125px;
  margin-left: 9px;
}

.playback .row button {
  width: 25px;
  height: 22px;
}

.playback input {
  width: 64px;
  height: 20px;
}

.playback .row .spin button {
  width: 11px;
  height: 8px;
}

.navs {
  display: grid;
  grid-template-columns: repeat(4, 23px);
  grid-auto-rows: 22px;
}

/* color selector */
.dialog {
  position: absolute;
  left: 375px;
  top: 75px;
  width: 469px;
  padding: 0 5px 5px;
  border: 1px solid #20262c;
  border-radius: 7px 7px 4px 4px;
  box-shadow: inset 0 0 0 1px #b4bcc4, 0 2px 8px #111;
  background: linear-gradient(90deg, #a4acb6a8, #5a6570b8 30%, #586470b8 60%, #87909ac0);
  backdrop-filter: blur(4px);
}

.dialog-title {
  display: flex;
  justify-content: space-between;
  height: 27px;
  color: #0c0c0c;
}

.dialog-title span {
  padding: 5px 0 0 1px;
  text-shadow: 0 0 6px #fff;
}

.dialog-title button {
  width: 48px;
  height: 19px;
  color: #fff;
  font-size: 13px;
  font-weight: bold;
  text-shadow: 0 0 2px #000;
  border: 1px solid #a9b0b8;
  border-top: 0;
  border-radius: 0 0 5px 5px;
}

.dialog-body {
  display: flex;
  height: 214px;
  background: #444;
  border: 1px solid #b4bcc4;
}

.picker {
  display: grid;
  grid-template-columns: 20px 151px 22px;
  grid-template-rows: 22px 153px 20px;
  gap: 5px;
  width: 206px;
}

.hue-title {
  grid-column: 2;
  text-align: center;
  padding: 3px 6px 0 0;
}

.white-title {
  grid-column: 3;
  white-space: nowrap;
  padding-top: 3px;
  margin-left: -4px;
}

.black-title {
  grid-row: 2;
  grid-column: 1;
  padding: 36px 0 0 1px;
  line-height: 26px;
}

.hue, .white {
  position: relative;
  border: 1px solid #777;
}

.hue {
  background: linear-gradient(transparent, #000), linear-gradient(90deg, #f00, #ff0 17%, #0f0 33%, #0ff 50%, #00f 67%, #f0f 83%, #f00);
}

.white {
  background: linear-gradient(#f90, #fff);
}

.down, .right, .left, .spot {
  position: absolute;
  filter: drop-shadow(0 0 1px #000);
}

.down {
  left: 8px;
  top: -9px;
  border: 7px solid transparent;
  border-top: 8px solid #fff;
  border-bottom: 0;
}

.right {
  left: -9px;
  top: -7px;
  border: 7px solid transparent;
  border-left: 7px solid #fff;
  border-right: 0;
}

.left {
  right: -9px;
  top: 74px;
  border: 7px solid transparent;
  border-right: 6px solid #fff;
  border-left: 0;
}

.spot {
  left: 12px;
  top: 0;
  width: 7px;
  height: 3px;
  background: #1460f0;
}

.picker-buttons {
  grid-column: 2 / 4;
  display: flex;
  justify-content: space-between;
  margin-right: -2px;
}

.dropper {
  width: 20px;
  height: 20px;
  margin-left: 2px;
}

.dropper svg {
  width: 16px;
  height: 16px;
}

.reset {
  width: 56px;
  height: 20px;
}

.values {
  flex: 1;
  padding: 21px 9px 0 0;
}

.chan {
  display: flex;
  align-items: center;
  height: 18px;
}

.chan.next {
  margin-top: 6px;
}

.chan label {
  flex: 1;
  text-align: right;
  padding-right: 3px;
  padding-top: 2px;
}

.chan .bar {
  appearance: none;
  width: 144px;
  height: 16px;
  border: 1px solid #777;
}

.bar::-webkit-slider-thumb {
  appearance: none;
  width: 4px;
  height: 14px;
  background: #fff;
  border: 1px solid #000;
  border-width: 0 1px;
}

.chan input[type="text"] {
  width: 31px;
  margin-left: 1px;
}

.chan .spin {
  margin-left: 2px;
}

.bar.r {
  background: linear-gradient(90deg, #00d188, #d8d188);
}

.bar.g {
  background: linear-gradient(90deg, #ff0088, #ffe088);
}

.bar.b {
  background: linear-gradient(90deg, #ffd100, #ffd1e6);
}

.bar.h {
  background: linear-gradient(90deg, #e11, #ee8800 5%, #e4e000 17%, #00e000 34%, #00e0e0 50%, #0000e0 67%, #e000e0 83%, #e00040);
}

.bar.s {
  background: linear-gradient(90deg, #fff, #ffe4b8 50%, #ffc828);
}

.bar.v {
  background: linear-gradient(90deg, #161412, #8c7c60 30%, #ffe4bc);
}

.compare {
  height: 29px;
  width: 194px;
  margin: 15px 0 5px auto;
  border: 1px solid #777;
  background: linear-gradient(90deg, #fff 50%, #ffd188 50%);
}

.actions {
  display: flex;
  justify-content: flex-end;
  gap: 4px;
}

.actions button {
  width: 55px;
  height: 20px;
}
```
